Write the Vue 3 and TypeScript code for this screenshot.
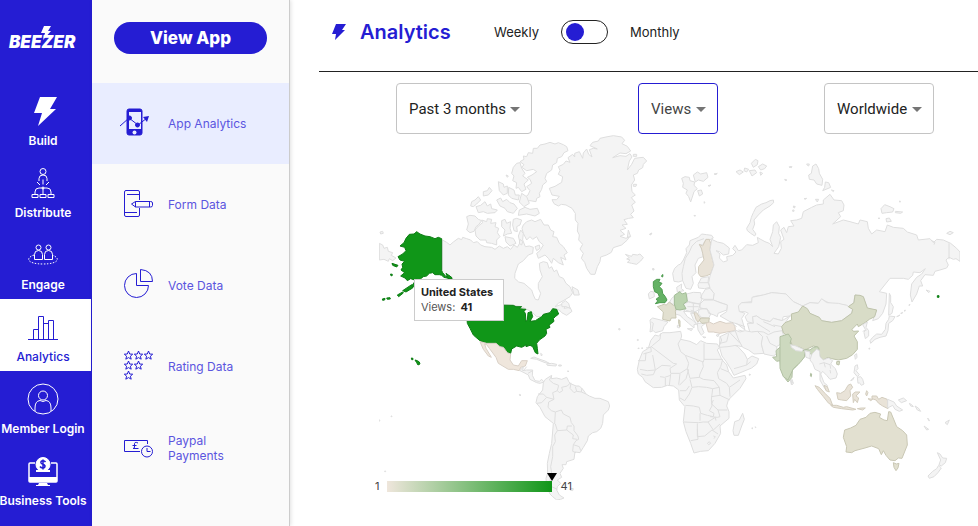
<script setup lang="ts">
import { ref } from 'vue'

interface Shape {
  d: string
  tone?: string
}
interface Sheet {
  x: number
  y: number
  shapes: Shape[]
  borders?: string
}

const mainNav = ['Build', 'Distribute', 'Engage', 'Analytics', 'Member Login', 'Business Tools']
const subNav = ['App Analytics', 'Form Data', 'Vote Data', 'Rating Data', 'Paypal Payments']
const monthly = ref(false)

const filters = [
  { id: 'period', label: 'Period', value: 'Past 3 months', active: false },
  { id: 'metric', label: 'Metric', value: 'Views', active: true },
  { id: 'region', label: 'Region', value: 'Worldwide', active: false },
]

/* Each sheet covers a part of the world at three units to one map unit. */
const sheets: Sheet[] = [
  {
    x: 370,
    y: 130,
    shapes: [
      { d: 'M217 330 230 337 240 345 250 336 265 325 275 329 278 322 290 326 302 330 310 338 322 335 332 345 345 350 365 352 375 358 388 348 400 355 412 350 422 358 432 345 442 352 450 338 445 318 452 300 460 310 458 330 466 350 478 348 490 352 488 370 475 375 460 392 445 402 435 430 434 445 446 456 462 460 485 480 490 495 496 508 505 510 512 490 505 475 505 460 517 440 510 420 508 400 520 395 532 398 537 415 545 410 552 425 560 420 568 440 580 445 588 460 600 470 608 488 600 500 580 512 565 520 555 530 570 525 590 520 582 535 600 532 606 544 590 556 575 548 568 540 552 536 540 548 515 560 500 560 485 545 470 538 455 530 430 526 296 520 280 485 262 460 250 447 235 440 217 434Z' },
      { d: 'M575 520 586 512 596 520 600 535 588 530 576 530Z M606 470 624 480 628 495 612 495Z' },
      { d: 'M460 285 470 275 485 270 495 275 512 268 522 285 535 285 542 300 552 305 548 320 560 322 568 340 580 350 592 368 582 375 588 390 572 382 580 405 565 398 550 385 545 400 535 385 525 375 515 380 505 385 500 370 510 362 520 345 508 335 500 320 488 328 480 320 470 330 460 310 456 295Z' },
      { d: 'M290 260 300 256 315 258 325 268 335 272 325 285 318 290 312 304 300 308 290 300 295 282Z' },
      { d: 'M315 300 325 288 338 278 335 270 350 275 352 266 365 268 362 280 378 278 375 290 386 295 382 308 390 320 380 330 380 345 365 340 350 338 348 330 330 330 318 318Z' },
      { d: 'M450 95 462 88 460 78 470 80 475 68 488 70 490 55 502 55 510 45 525 42 540 37 555 42 565 38 580 44 590 50 594 62 582 68 575 80 562 85 560 98 548 105 545 120 530 130 525 145 530 155 518 165 515 178 508 190 510 200 500 205 498 215 480 212 465 215 460 205 474 195 480 182 470 170 485 160 480 148 472 142 486 135 500 125 490 118 470 122 455 112 462 104Z' },
      { d: 'M440 100 450 98 455 115 465 130 458 138 475 150 462 162 468 178 455 185 445 172 438 175 440 158 428 152 432 138 425 130 430 112Z' },
      { d: 'M448 240 465 232 480 238 502 235 508 250 495 258 470 252 445 256Z M385 155 400 162 402 172 412 168 412 190 400 195 388 182Z M340 185 352 182 358 172 366 182 355 195 340 198Z M305 215 315 210 325 200 332 210 320 222 310 230 302 228Z M318 230 332 226 345 215 352 228 362 222 365 236 382 240 375 248 352 250 340 245 325 248Z M380 210 392 204 398 215 410 208 420 218 432 222 442 235 430 250 412 245 405 235 390 228Z M416 172 432 180 436 195 448 195 445 210 425 205 415 195Z M455 190 470 200 478 220 462 230 448 216Z M408 135 415 138 412 142Z' },
      { d: 'M395 272 405 268 410 280 422 275 420 295 425 310 412 312 400 318 405 300 395 290Z M430 268 440 265 455 270 450 285 440 290 442 305 432 302 428 285Z M405 320 430 325 438 340 420 348 408 336Z M495 350 508 345 510 355 500 362Z M450 328 458 335 455 345 448 340Z' },
      { d: 'M28 340 38 345 42 355 52 352 55 364 68 368 64 376 78 384 68 392 58 386 55 394 42 388 28 390Z M30 306 38 304 40 310 32 312Z' },
      { tone: 'top', d: 'M215 326 205 322 195 326 180 320 165 318 150 312 140 305 132 312 118 313 108 325 102 338 90 348 104 352 108 362 98 372 84 380 90 390 104 394 96 402 98 412 93 420 104 428 92 438 105 444 112 452 122 446 134 450 140 447 125 468 134 472 146 452 152 446 160 440 170 438 178 430 188 428 195 434 208 434 215 436 222 442 240 446 246 445 238 438 228 440 218 428 215 422Z' },
      { tone: 'top', d: 'M66 400 84 406 80 411 68 406Z M82 495 98 486 100 489 86 500Z M98 482 125 464 128 474 108 486Z M50 504 60 503 61 507 52 508Z M37 507 45 505 44 510 38 511Z M62 432 67 433 66 438 62 436Z M228 430 245 442 246 447 234 445Z' },
      { tone: 'top', d: 'M296 524 430 526 438 530 455 530 448 536 468 538 462 544 466 550 468 574 472 570 474 548 484 545 488 560 480 574 496 572 515 560 520 553 540 548 548 536 560 538 566 552 556 560 550 566 552 574 545 580 537 585 540 592 528 598 530 610 525 618 508 630 500 640 502 655 504 672 496 668 488 650 480 646 468 650 470 644 455 652 440 648 425 657 422 670 412 668 400 652 390 650 378 640 350 640 330 632 318 622 310 615 300 595 292 580 290 550 292 530Z' },
    ],
  },
  {
    x: 370,
    y: 320,
    shapes: [
      { tone: 't1', d: 'M330 65 350 70 378 70 390 80 400 82 412 98 422 102 420 120 430 135 445 138 455 122 472 122 466 138 452 142 448 152 430 148 415 148 385 130 378 112 358 85 350 74 344 72 348 85 360 105 364 112 355 108 340 88Z' },
      { d: 'M450 152 460 140 458 152 470 150 488 150 487 166 495 182 508 184 515 178 522 186 510 190 500 188 480 178 475 165 462 158Z M482 115 492 111 510 118 525 123 540 131 525 128 500 118Z M530 132 545 130 560 133 558 138 532 136Z M566 135 574 135 574 138 566 138Z M512 100 517 104 514 108Z M448 223 453 225 450 228Z' },
      { d: 'M520 188 526 178 545 166 544 176 560 174 575 178 590 172 596 184 600 190 618 198 628 198 640 210 648 222 658 228 675 235 690 235 715 245 719 258 715 270 700 285 698 310 692 325 680 335 668 338 655 348 652 362 640 382 630 398 615 396 612 418 590 425 588 434 576 434 580 445 570 460 575 472 562 480 572 490 562 500 560 510 568 525 582 534 572 538 560 540 548 530 540 522 530 500 528 475 533 460 532 430 538 400 545 370 550 310 525 290 510 262 498 248 502 230 518 210Z M602 505 610 506 608 512 600 510Z' },
      { tone: 'top', d: 'M124 114 129 115 129 119 125 119Z M135 120 142 122 148 126 150 132 144 135 140 128Z' },
      { d: 'M22 301 30 300 28 304Z M63 288 66 288 66 290 63 290Z M44 453 47 453 47 455 44 455Z M592 153 596 153 595 156Z M746 26 750 26 750 30 746 29Z' },
    ],
    borders: 'M470 140 462 150M488 152 474 160M545 168 538 180 550 190 566 196 562 212 568 218 578 212 575 202 592 198 602 188M603 190 600 205 612 218 620 214 616 200M620 214 634 216 636 204M634 216 648 222M562 212 548 218 552 238 530 232 520 222 504 222M530 232 515 248 500 250M552 238 536 246 534 262 544 272 556 276 574 270 580 282 600 292 604 308 612 318 612 332 624 348 626 358 618 362 610 374 628 380 632 392M556 276 554 312M556 312 562 332 590 330 592 318 606 318M590 330 610 345 608 356 622 358M562 332 554 345 556 365 548 380 548 410 542 440 545 460 540 480 545 500 562 508M610 374 608 394 618 398',
  },
  {
    x: 540,
    y: 125,
    shapes: [
      { d: 'M28 190 45 184 65 172 68 155 55 148 60 136 55 125 70 118 78 108 90 112 84 98 98 88 104 96 104 85 118 80 128 100 130 84 140 72 146 88 156 96 148 74 160 70 172 72 150 62 158 52 175 48 180 40 198 36 220 32 245 36 254 46 246 56 262 64 272 78 258 86 240 84 218 98 240 92 258 94 270 86 276 96 268 108 262 135 275 118 284 100 300 98 310 97 320 108 310 118 308 128 296 135 292 145 280 150 284 165 274 180 276 200 286 210 274 218 286 232 275 240 282 258 272 268 280 278 266 280 252 284 262 298 246 300 258 310 240 316 254 328 240 334 258 340 268 335 262 345 245 360 220 368 214 382 200 390 182 396 180 410 172 425 165 448 152 448 140 430 134 412 124 400 130 385 120 372 128 358 116 345 118 330 112 318 114 295 106 285 106 265 96 250 78 240 64 238 55 243 42 236 36 224 50 224 58 214 36 210 32 200Z M265 315 272 335 262 338Z M280 88 290 88 290 94 280 94Z M280 178 290 178 288 184 280 184Z' },
      { d: 'M256 388 268 392 275 394 278 388 292 390 300 387 310 398 302 408 290 418 275 415 262 412 270 405 260 402 268 398Z M328 328 336 324 332 330Z M338 431 342 431 342 435 338 435Z' },
    ],
  },
  {
    x: 630,
    y: 150,
    shapes: [
      { d: 'M155 85 165 80 178 82 180 92 194 96 192 106 202 116 192 125 188 138 182 156 176 140 168 130 172 120 158 112 160 100Z M190 75 202 66 212 72 230 68 234 82 220 94 205 90 196 96Z M203 122 214 120 218 132 208 138Z M252 72 262 70 258 74Z M234 107 243 105 238 109Z M222 155 225 157 223 160Z' },
      { d: 'M318 65 330 60 340 66 328 74Z M344 54 356 58 350 66 342 62Z M364 40 376 28 384 32 382 44 370 52Z M358 62 375 60 380 68 366 78Z M385 50 398 42 410 48 404 56 392 60Z M390 66 398 70 392 76Z M478 52 484 50 484 53Z M466 88 470 90 468 92Z M490 170 494 169 494 174 490 172Z M488 180 492 180 492 184 488 184Z' },
      { d: 'M430 150 420 152 408 158 395 162 378 172 370 188 364 202 360 218 350 235 352 242 362 250 374 258 378 252 368 238 374 222 372 210 385 195 400 180 420 168 431 158Z' },
      { d: 'M128 370 134 355 145 345 152 342 160 330 170 308 168 296 178 285 180 272 195 266 205 262 215 252 230 254 245 256 250 264 238 270 228 268 218 284 208 284 216 300 220 320 205 325 195 345 198 368 186 380 190 400 182 418 168 415 158 392 146 396 132 394Z M140 412 155 402 154 416 162 422 142 426Z' },
      { tone: 't2', d: 'M208 283 218 288 228 268 238 268 242 280 240 300 252 345 242 372 228 378 212 380 205 370 206 350 222 330 218 310 214 294Z' },
      { d: 'M245 268 262 276 280 280 298 294 296 312 280 315 268 305 258 302 270 312 268 324 280 336 292 332 290 320 308 316 318 306 308 296 315 286 325 302 335 300 350 284 368 286 385 278 382 262 392 268 405 275 418 280 428 290 420 268 428 245 430 225 440 215 448 230 446 250 452 262 446 290 432 310 445 312 454 295 452 275 462 268 452 240 462 232 470 248 475 230 492 228 482 212 500 210 515 205 520 185 545 172 560 165 580 162 580 150 600 133 612 150 635 152 642 165 640 182 625 188 632 200 608 222 640 210 660 215 685 222 690 210 712 215 715 235 725 252 740 240 765 245 772 225 790 232 820 235 832 246 860 255 865 270 900 266 910 278 920 268 940 270 962 280 980 295 990 306 990 334 978 326 970 328 957 322 948 330 955 345 950 354 930 360 915 364 910 376 885 374 872 392 878 408 868 408 860 432 846 456 841 435 845 402 860 382 875 372 886 356 870 368 850 366 848 376 835 388 820 385 780 385 748 425 770 430 768 462 758 490 745 506 728 512 740 480 712 476 700 440 675 435 670 460 655 470 650 466 600 460 575 448 565 460 540 458 518 468 490 455 468 432 425 428 400 435 370 440 365 455 335 458 328 470 330 485 345 490 335 505 345 540 322 522 300 515 270 498 290 485 292 465 250 450 252 430 240 415 236 398 240 378 252 345 240 300Z' },
      { d: 'M328 485 325 468 335 458 365 458 366 442 400 435 425 428 450 430 468 432 490 455 518 468 510 480 500 495 480 498 460 500 456 512 430 505 420 515 395 508 380 498 368 500 370 520 352 515 345 500 355 490 345 485Z' },
      { d: 'M370 520 368 500 380 498 395 508 420 515 430 505 456 512 480 498 468 515 456 530 465 550 440 545 430 560 400 555 378 545 360 548 352 520Z' },
      { tone: 't5', d: 'M70 395 80 388 90 388 86 396 96 400 88 410 96 418 98 430 106 440 111 450 105 458 90 458 76 461 84 452 78 448 88 440 84 430 74 425 70 410Z M96 375 99 374 98 381 95 380Z' },
      { d: 'M55 432 62 424 72 426 73 440 58 447Z M68 356 72 358 70 360Z M60 252 65 250 62 254Z M192 196 197 197 194 199Z' },
      { d: 'M60 510 68 504 100 512 114 516 102 530 98 542 76 548 70 542 60 546 62 528Z M118 458 125 445 134 438 134 464 128 462Z M138 480 165 476 162 486 172 500 190 512 200 522 192 524 192 534 176 520 160 506 150 496 136 492Z M142 526 149 526 148 534 142 532Z M172 536 188 536 184 542Z' },
      { d: 'M170 432 190 427 212 428 216 450 208 462 190 458 172 454Z M204 404 214 384 236 380 234 398 240 412 224 416 206 414Z M216 434 226 418 240 415 252 430 250 448 222 448 212 444Z M210 462 222 450 250 450 270 458 292 465 290 480 264 490 262 500 250 494 236 490 232 478 210 474Z M208 478 230 475 242 492 236 505 214 502 204 490Z M160 462 176 456 190 460 210 462 206 480 190 488 166 480Z M182 490 194 490 204 516 202 526 190 508Z M202 520 226 520 214 530 222 548 214 556 204 540Z M218 560 228 562 222 564Z M258 556 268 552 264 560Z' },
      { tone: 't3', d: 'M82 470 94 466 104 462 108 466 118 456 130 466 140 468 136 484 138 504 124 504 120 513 98 508 100 486Z M146 509 150 512 150 530 146 520Z' },
      { tone: 't4', d: 'M133 436 142 430 150 425 156 432 168 428 172 454 160 462 168 476 150 480 138 478 133 462Z' },
      { tone: 't2', d: 'M192 488 200 488 206 498 213 506 204 516 198 508Z' },
      { tone: 't3', d: 'M212 504 238 504 236 518 216 520 208 512Z' },
      { tone: 't1', d: 'M228 520 238 516 250 522 270 514 288 520 308 518 315 530 316 542 290 546 270 550 250 546 235 546Z' },
    ],
    borders: 'M158 392 156 370 160 350 166 325 178 306 186 288 200 274 222 266M64 516 70 520 66 542M206 398 236 398M172 470 206 470M190 458 190 488M316 520 345 530M325 540 345 545M380 520 420 545M400 515 435 530M430 525 456 530M300 515 320 530M160 484 190 486M210 474 222 476M182 480 200 488',
  },
  {
    x: 630,
    y: 300,
    shapes: [
      { d: 'M75 105 85 108 98 98 120 98 152 94 155 108 152 118 180 124 200 134 212 122 230 130 262 132 268 142 262 150 275 178 290 195 296 215 310 234 345 226 348 236 330 265 295 300 290 318 297 335 297 355 270 378 272 400 255 430 235 452 212 454 192 459 182 430 168 395 160 365 165 320 148 300 146 270 130 258 112 256 95 262 70 263 45 245 38 232 25 222 22 208 28 180 38 155 55 145 62 122Z' },
      { d: 'M338 340 343 358 335 378 325 406 312 406 309 392 314 365 328 360Z M358 222 362 224 358 226Z M366 383 369 385 366 387Z M376 380 378 382 376 383Z M22 118 26 120 22 122Z M24 144 28 145 24 146Z M34 144 39 144 36 146Z' },
      { d: 'M268 140 280 134 300 130 324 140 344 162 352 178 366 168 386 176 380 192 365 204 312 226 304 210 288 184 276 168Z' },
      { d: 'M270 110 295 98 318 92 328 110 336 140 318 136 294 140 268 142Z' },
      { d: 'M315 90 330 96 345 92 365 96 382 94 400 108 394 132 402 160 372 162 356 150 338 142 326 120Z' },
      { d: 'M382 94 400 96 415 104 432 96 456 92 462 110 455 130 440 140 442 160 430 168 402 162 394 132 398 110Z' },
      { d: 'M486 238 490 250 484 254 482 242Z' },
      { tone: 't6', d: 'M462 110 475 105 476 118 484 134 500 146 522 148 526 168 512 180 500 198 487 210 486 232 474 246 466 236 452 205 450 182 440 184 428 172 440 170 438 152 452 140 460 128Z' },
    ],
    borders: 'M92 100 90 118 68 136 62 142 48 144M62 140 64 155 40 162M64 140 130 190 140 192M24 182 46 182 48 158M68 165 76 210 52 212 30 208M152 118 144 132 152 155 166 166 220 186M222 130 222 178 278 178M222 178 220 186M166 166 176 190 172 206 150 220 122 220 120 205 140 192M76 210 96 196 122 198M76 210 70 224 50 226 34 222M90 230 104 232 122 226M106 234 106 258M122 222 118 256M172 206 180 235 208 232 210 222 220 200 218 186M150 222 146 254M176 208 168 236 148 256M180 238 186 262 205 260 230 262 248 266 268 262 252 242 220 238 208 232M278 178 272 200 262 218 266 236 290 250 298 262 330 240M272 206 296 216M298 262 300 290M268 262 270 286 300 300M150 272 168 272 178 258M150 294 164 302 178 282 186 262M248 266 244 300 246 318 238 332 252 340 250 350 232 346 212 340 208 322 190 318 166 316M244 290 270 286M250 300 245 312 264 330 292 330M264 330 270 350 262 352 240 350M161 366 206 368 220 366 234 366 256 352 258 362M210 340 210 362M234 366 250 390 270 372M202 370 202 410 224 408 246 390 264 402M202 388 204 418 182 422M232 430 238 425 242 430 236 434 232 430M250 408 256 410 252 416M296 100 290 125 270 130M300 98 330 130M312 206 350 195 362 185M350 195 352 178M270 108 275 120 268 138M410 108 420 130 440 140',
  },
  {
    x: 780,
    y: 150,
    shapes: [
      { d: 'M68 468 90 458 115 460 125 446 140 458 175 460 200 466 218 478 215 490 185 512 155 517 125 512 90 490Z' },
      { tone: 't7', d: 'M5 530 15 518 35 510 34 492 55 486 68 468 82 476 90 490 118 502 125 512 155 517 185 512 215 490 218 478 205 470 222 458 225 435 240 436 250 440 262 474 290 480 284 500 268 508 255 518 235 530 232 522 216 538 220 544 236 543 222 558 232 575 232 598 218 614 200 625 175 630 155 626 144 622 130 630 120 620 116 592 100 588 75 600 60 592 38 588 28 565 10 548Z M170 635 179 634 177 645 170 643Z' },
      { tone: 't6', d: 'M75 598 90 600 100 592 112 590 116 596 104 612 98 620 90 608 78 612Z M92 670 95 672 94 680 91 678Z M25 552 34 566 30 580 40 590 60 600 74 602 74 620 60 638 40 656 24 690 10 680 0 655 0 560Z' },
      { d: 'M74 602 90 606 90 626 78 622Z M96 612 110 598 118 602 120 620 130 630 145 624 158 632 152 642 166 656 172 672 168 684 150 688 140 676 128 664 122 672 132 698 142 706 140 722 132 712 120 690 120 665 105 658 98 640 90 630Z M32 690 40 700 36 704Z' },
      { d: 'M270 572 278 562 290 552 305 553 316 538 318 520 326 508 328 498 345 500 338 512 326 520 324 542 318 558 300 562 285 568 272 580Z M328 430 332 438 332 458 340 470 336 490 326 496 327 462Z M248 524 262 516 258 532 266 542 266 558 256 566 252 548 256 538Z M224 615 230 611 231 622 226 628Z M350 500 360 495 356 498Z M362 490 368 487 366 491Z M372 482 376 480 375 484Z M386 465 390 463 388 467Z' },
      { d: 'M225 648 232 644 234 656 228 662 238 674 232 680 222 668Z M232 682 242 680 248 688 252 702 244 706 238 698 234 700Z M212 692 222 682 218 690Z M32 584 48 588 70 598 66 604 48 602 34 592Z' },
      { tone: 't2', d: 'M105 707 118 712 135 730 150 745 158 766 146 760 130 740 112 718Z M152 766 170 766 190 772 200 770 228 778 218 780 185 776 160 772Z M170 728 182 730 195 722 204 706 212 702 218 712 210 722 212 738 200 752 185 750 174 748Z M218 732 226 726 240 726 228 738 236 744 232 758 224 748 220 758Z M232 776 244 774 256 774 248 780Z M132 706 142 710 148 726 138 722Z M260 722 264 728 260 738 257 732Z M264 746 278 748 272 752Z M276 738 290 738 296 748 306 742 322 748 324 776 308 768 296 760 288 750 276 746Z' },
      { d: 'M323 748 342 756 350 768 368 780 358 784 345 778 338 766 323 774Z M355 750 370 744 380 752 364 758Z M388 760 395 764 400 770 392 768Z M405 768 415 774 422 784 412 780Z M443 804 449 812 446 812Z M432 828 446 838 440 840Z M495 818 508 810 502 824Z' },
      { tone: 't3', d: 'M270 790 285 787 302 792 298 802 312 810 322 812 326 785 332 786 342 810 350 830 368 842 380 855 382 885 366 925 355 924 345 932 330 930 318 916 310 902 304 914 296 896 275 888 255 894 240 898 225 902 215 908 198 906 200 890 190 862 194 840 212 834 228 826 240 808 258 802Z M340 938 349 942 357 940 354 954 348 962 342 952Z' },
      { d: 'M472 908 480 912 488 924 500 925 496 938 484 948 477 944 482 930Z M476 946 484 954 474 968 462 980 448 985 444 978 458 964 470 956Z' },
      { d: 'M86 75 94 70 98 48 108 42 116 56 118 70 128 88 126 106 110 102 102 90 88 88Z M128 122 134 112 136 96 146 98 152 112 138 118Z M303 176 314 164 330 170 342 176 338 186 320 188 306 190Z M346 184 368 186 362 190 346 188Z M318 206 328 204 334 214 320 216Z M500 250 510 244 520 248 510 254Z M28 50 36 50 32 54Z M80 42 88 42 86 48 82 46Z M154 120 162 122 160 125Z M14 88 20 90 16 92Z M40 168 46 170 42 173Z M106 148 116 148 112 156Z M72 146 80 145 76 148Z M358 153 362 154 360 157Z M266 596 270 594 268 598Z M438 420 450 424 446 428Z M295 204 299 204 297 207Z' },
      { tone: 'top', d: 'M472 437 477 437 477 442 472 442Z' },
    ],
    borders: 'M507 280 507 328M118 642 132 638 150 644 152 656M132 638 136 652M150 660 152 670M248 544 260 540M455 272 465 276 462 284',
  },
]
</script>

<template>
  <div class="shell">
    <nav class="rail" aria-label="Main">
      <a href="#" class="logo">
        <span>BEEZER</span>
        <svg class="logo-bolt" viewBox="0 0 12 14"><path d="M4 0h7L8 5h3L3 14l2-7H1z" /></svg>
      </a>
      <a v-for="item in mainNav" :key="item" href="#" class="rail-item" :class="{ current: item === 'Analytics' }">
        <svg v-if="item === 'Build'" class="rail-icon" viewBox="0 0 32 32">
          <path fill="currentColor" d="M13 2h17l-7 12h6L11 31l4-13H7z" />
        </svg>
        <svg v-else-if="item === 'Distribute'" class="rail-icon line" viewBox="0 0 32 32">
          <circle cx="16" cy="4.500" r="3" />
          <path d="M12 14v-2.500q0-3.500 4-3.500t4 3.500V14M16 12.500v5M10 15l3 3M22 15l-3 3M16 21v6M8 27v-2q0-4 4-4h8q4 0 4 4v2M5 27.500h6v3H5zM13 27.500h6v3h-6zM21 27.500h6v3h-6z" />
          <circle cx="16" cy="21" r="1" />
        </svg>
        <svg v-else-if="item === 'Engage'" class="rail-icon line" viewBox="0 0 32 32">
          <circle cx="11.500" cy="8.500" r="2.500" /><circle cx="21.500" cy="8.500" r="2.500" />
          <path d="M7.500 20.500v-5q0-4 4-4t4 4v5zM17.500 20.500v-5q0-4 4-4t4 4v5z" />
          <path stroke-dasharray="1.500 1.500" d="M7 16C-2 19 0 25 16 25s18-6 9-9" />
        </svg>
        <svg v-else-if="item === 'Analytics'" class="rail-icon line" viewBox="0 0 32 32">
          <path d="M1 28.500h30M6.500 28V18.500h5M11.500 28V5.500h5V28M16.500 12.500h5M21.500 28V9.500h5V28" />
        </svg>
        <svg v-else-if="item === 'Member Login'" class="rail-icon line" viewBox="0 0 32 32">
          <circle cx="16" cy="16" r="15" /><circle cx="16" cy="12.500" r="4.500" />
          <path d="M8 28v-3q0-7 5-7.500 3 2 6 0 5 .500 5 7.500v3" />
        </svg>
        <svg v-else class="rail-icon line" viewBox="0 0 32 32">
          <path stroke-width="1.500" d="M8 8H3q-1 0-1 1v17q0 1 1 1h26q1 0 1-1V9q0-1-1-1h-5" />
          <path fill="currentColor" stroke="none" d="M2 22h28v4q0 1-1 1H3q-1 0-1-1zM12 28h8l1 2h2v1H9v-1h2zM9 15h14v2H9z" />
          <circle cx="16" cy="9.500" r="7" fill="currentColor" />
          <path stroke="#251dd3" stroke-width="1.500" d="M18.500 7q-1-1.500-3-1.200t-1.500 2q.500 1 2 1.500t2 1.600q0 1.800-2 2t-3-1.400M16 4.500v10" />
        </svg>
        <span>{{ item }}</span>
      </a>
    </nav>

    <aside class="panel">
      <button type="button" class="view-app">View App</button>
      <nav aria-label="Analytics sections">
        <a v-for="item in subNav" :key="item" href="#" class="panel-item" :class="{ current: item === 'App Analytics' }">
          <svg v-if="item === 'App Analytics'" class="panel-icon" viewBox="0 0 36 32">
            <rect x="7" y="1" width="15" height="26" rx="2" fill="currentColor" />
            <path fill="#e9edff" stroke="none" d="M9 4h12v17H9z" /><circle cx="14.500" cy="24.500" r="2" fill="#e9edff" stroke="none" />
            <path d="M0 18l9-8 9 7 9-7" /><circle cx="9.500" cy="10" r="2" fill="currentColor" />
            <circle cx="17.500" cy="17" r="2" fill="currentColor" /><path fill="currentColor" stroke="none" d="M23 9l6-1-2 6z" />
          </svg>
          <svg v-else-if="item === 'Form Data'" class="panel-icon" viewBox="0 0 36 32">
            <path d="M19.500 11V3q0-1.500-1.500-1.500H6Q4.500 1.500 4.500 3v23q0 1.500 1.500 1.500h12q1.500 0 1.500-1.500v-7M7 5.500h12M5 23.500h12" />
            <path d="M11.500 15l4-2.500h15q2 0 2 1.500v2.500q0 1.500-2 1.500h-15zM15.500 12.500v5.500M29.500 12.500v5.500" />
          </svg>
          <svg v-else-if="item === 'Vote Data'" class="panel-icon" viewBox="0 0 36 32">
            <path d="M16.500 3.500A12 12 0 1 0 28.500 15.500H16.500zM20.500-.500v12h12q0-11-12-12z" />
          </svg>
          <svg v-else-if="item === 'Rating Data'" class="panel-icon" viewBox="0 0 36 32">
            <path
              v-for="[x, y] in [[8, 0], [18, 0], [28, 0], [8, 10], [18, 10], [8, 20]]"
              :key="`${x}-${y}`"
              :transform="`translate(${x} ${y})`"
              d="M0.500 0l1.200 3 3 .200-2.300 2 .800 3-2.700-1.600L-2.200 8.200l.800-3-2.300-2 3-.200z"
            />
          </svg>
          <svg v-else class="panel-icon" viewBox="0 0 36 32">
            <path d="M20 19.500H4.500v-11h23V12M18 11q-4-2-3.500 2v2q0 1.500-1.500 1.500h5.500M12.500 13.500h4" />
            <circle cx="27" cy="19.500" r="5.500" /><path d="M27 16v3.500h3.500" />
          </svg>
          <span>{{ item }}</span>
        </a>
      </nav>
    </aside>

    <main class="content">
      <header class="head">
        <svg class="head-bolt" viewBox="0 0 14 16"><path d="M4 0h10l-4 6h3L3 16l1-6H0z" /></svg>
        <h1>Analytics</h1>
        <label class="switch">
          <span>Weekly</span>
          <input v-model="monthly" type="checkbox" role="switch" />
          <span>Monthly</span>
        </label>
      </header>

      <div class="filters">
        <div v-for="f in filters" :key="f.id" class="filter" :class="{ active: f.active }">
          <select :id="f.id" :aria-label="f.label"><option>{{ f.value }}</option></select>
          <svg viewBox="0 0 10 5"><path d="M0 0h10L5 5z" /></svg>
        </div>
      </div>

      <section class="map">
        <svg class="world" viewBox="319 134 659 366" role="img" aria-label="Views by country">
          <clipPath id="frame"><path d="M379 134h581v366H379z" /></clipPath>
          <g clip-path="url(#frame)">
            <g v-for="(s, i) in sheets" :key="i" :transform="`translate(${s.x} ${s.y}) scale(.33333)`">
              <path v-for="(shape, n) in s.shapes" :key="n" class="land" :class="shape.tone" :d="shape.d" />
              <path v-if="s.borders" class="border" :d="s.borders" />
            </g>
          </g>
        </svg>
        <div class="tip">
          <strong>United States</strong>
          <span>Views: <b>41</b></span>
        </div>
        <div class="legend">
          <span>1</span>
          <div class="scale"><svg viewBox="0 0 10 8"><path d="M0 0h10L5 8z" /></svg></div>
          <span>41</span>
        </div>
      </section>
    </main>
  </div>
</template>

<style>
body {
  margin: 0;
  background: #fff;
}
</style>

<style scoped>
.shell {
  display: flex;
  min-height: 100vh;
  font-family: Inter, "Liberation Sans", sans-serif;
}
a {
  color: inherit;
  text-decoration: none;
}
.rail {
  flex: 0 0 92px;
  min-width: 0;
  box-sizing: border-box;
  background: #251dd3;
  color: #fff;
}
.logo {
  position: relative;
  display: flex;
  height: 83px;
  align-items: center;
  padding-left: 9px;
  font-size: 17px;
  font-weight: 900;
  font-style: italic;
}
.logo-bolt {
  position: absolute;
  left: 40px;
  top: 26px;
  width: 12px;
  height: 14px;
  fill: #fff;
}
.rail-item {
  display: flex;
  flex-direction: column;
  align-items: center;
  gap: 4px;
  box-sizing: border-box;
  height: 72px;
  margin-right: 1px;
  padding: 12px 5px 0 0;
  font-size: 12px;
  font-weight: 600;
  line-height: 20px;
  white-space: nowrap;
}
.rail-item.current {
  background: #fff;
  color: #251dd3;
  font-weight: 500;
}
.rail-icon {
  width: 32px;
  height: 32px;
}
.line,
.panel-icon {
  fill: none;
  stroke: currentColor;
  stroke-width: 1;
  overflow: visible;
}
.panel {
  flex: 0 0 197px;
  background: #fafafa;
  border-right: 1px solid #ccc;
  box-shadow: 1px 0 4px rgba(0, 0, 0, 0.12);
}
.view-app {
  display: block;
  width: 153px;
  height: 32px;
  margin: 22px 0 29px 22px;
  padding: 0;
  border: 0;
  border-radius: 16px;
  background: #251dd3;
  color: #fff;
  font: 800 17px/32px Inter, sans-serif;
}
.panel-item {
  display: flex;
  align-items: center;
  gap: 12px;
  height: 81px;
  padding: 0 50px 0 28px;
  color: #5b55df;
  font-size: 12px;
  line-height: 15px;
}
.panel-item.current {
  background: #e9edff;
  padding-right: 0;
}
.panel-icon {
  flex: none;
  width: 36px;
  height: 32px;
  color: #251dd3;
}
.content {
  flex: 1;
  min-width: 0;
  padding-left: 29px;
}
.head {
  display: flex;
  align-items: center;
  height: 72px;
  box-sizing: border-box;
  padding: 0 0 7px 13px;
  border-bottom: 1px solid #222;
}
.head-bolt {
  width: 14px;
  height: 16px;
  margin-right: 14px;
  fill: #251dd3;
}
h1 {
  flex: 0 0 134px;
  margin: 0;
  color: #251dd3;
  font-size: 20px;
  font-weight: 600;
}
.switch {
  display: flex;
  align-items: center;
  gap: 22px;
  color: #222;
  font-size: 13px;
}
.switch input {
  appearance: none;
  box-sizing: border-box;
  width: 47px;
  height: 24px;
  margin: 0;
  padding: 2px 4px;
  border: 1px solid #222;
  border-radius: 12px;
}
.switch input::before {
  content: "";
  display: block;
  width: 18px;
  height: 18px;
  border-radius: 50%;
  background: #251dd3;
}
.switch input:checked::before {
  margin-left: auto;
}
.filters {
  display: flex;
  justify-content: space-between;
  padding: 11px 44px 0 77px;
}
.filter {
  position: relative;
}
.filter select {
  appearance: none;
  box-sizing: border-box;
  height: 51px;
  padding: 0 25px 0 12px;
  border: 1px solid #c4c4c4;
  border-radius: 4px;
  background: #fff;
  color: #222;
  font: 15px Roboto, sans-serif;
}
.filter.active select {
  border-color: #251dd3;
  color: #444;
}
.filter svg {
  position: absolute;
  right: 12px;
  top: 24px;
  width: 10px;
  height: 5px;
  fill: #757575;
  pointer-events: none;
}
.map {
  position: relative;
}
.world {
  display: block;
  width: 100%;
}
.land {
  fill: #f4f4f4;
  stroke: #dedede;
  stroke-width: 3;
  stroke-linejoin: round;
}
.border {
  fill: none;
  stroke: #dedede;
  stroke-width: 3;
}
.top { fill: #109618; stroke: #0d7c14; }
.t1 { fill: #efe6dc; stroke: #d9d0c6; }
.t2 { fill: #e9e3d8; stroke: #d3cdbf; }
.t3 { fill: #e2e0d0; stroke: #c9c7b4; }
.t4 { fill: #bad3ae; stroke: #a3bd98; }
.t5 { fill: #64b264; stroke: #4c9a4e; }
.t6 { fill: #cdd9bf; stroke: #b1c0a3; }
.t7 { fill: #d8dcc7; stroke: #bec3ab; }
.tip {
  position: absolute;
  left: 14.4%;
  top: 39.6%;
  display: flex;
  flex-direction: column;
  box-sizing: border-box;
  width: 90px;
  padding: 5px 6px;
  border: 1px solid #ccc;
  background: #fff;
  color: #222;
  font-size: 11px;
  line-height: 15px;
  white-space: nowrap;
}
.tip span {
  color: #555;
}
.tip b {
  margin-left: 2px;
  color: #222;
}
.legend {
  position: absolute;
  left: 8.5%;
  bottom: 7px;
  display: flex;
  align-items: center;
  gap: 8px;
  color: #444;
  font-size: 11px;
  line-height: 14px;
}
.scale {
  position: relative;
  width: 165px;
  height: 11px;
  background: linear-gradient(90deg, #efe6dc, #109618);
}
.scale svg {
  position: absolute;
  right: -5px;
  top: -8px;
  width: 10px;
  height: 8px;
}
</style>
